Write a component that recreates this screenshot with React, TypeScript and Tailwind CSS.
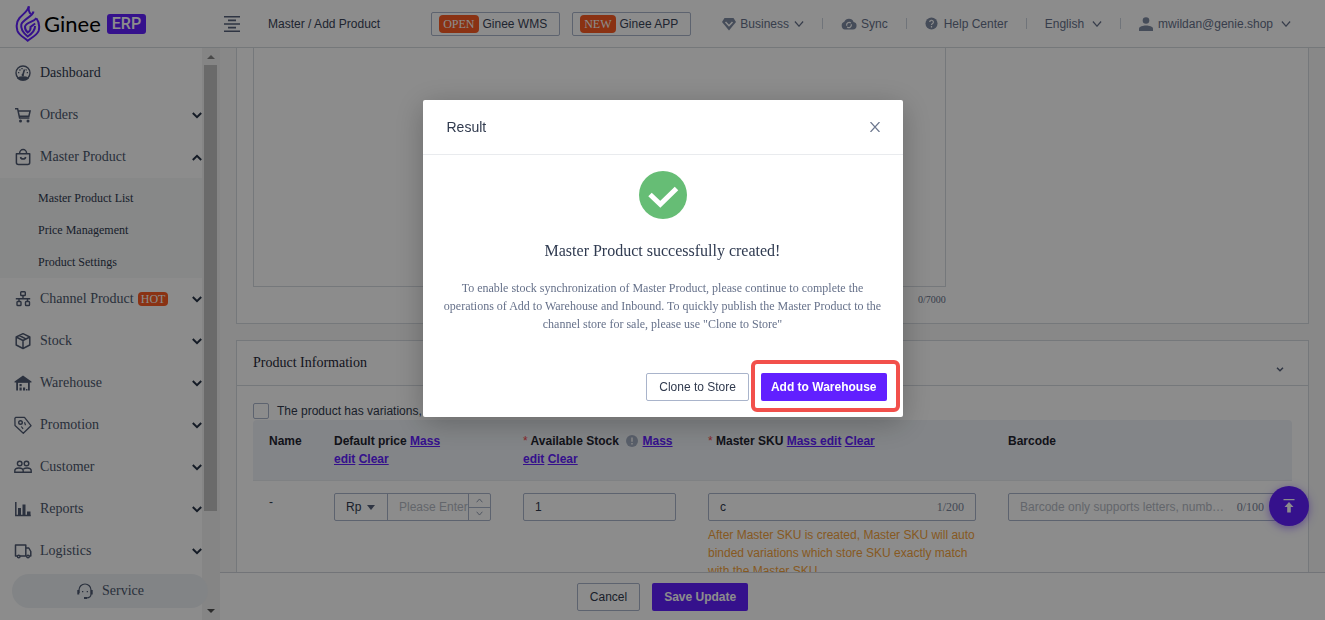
import { useState } from 'react'
import type { ReactNode } from 'react'

const serif = "font-['Liberation_Serif',serif]"

type IconProps = { children: ReactNode; className?: string }

function Icon({ children, className = '' }: IconProps) {
  return (
    <svg viewBox="0 0 18 18" fill="none" stroke="currentColor" strokeWidth="1.4" aria-hidden="true"
      className={`size-[18px] shrink-0 ${className}`}>
      {children}
    </svg>
  )
}

function Chevron({ className = 'h-[6px] w-[10px]' }: { className?: string }) {
  return (
    <svg viewBox="0 0 10 6" fill="none" stroke="currentColor" strokeWidth="1.2" aria-hidden="true"
      className={`shrink-0 ${className}`}>
      <path d="M.9 .5 5 5.2 9.1 .5" />
    </svg>
  )
}

const icons = {
  dashboard: (
    <Icon>
      <circle cx="9" cy="9" r="7" />
      <path d="M4 14.2c2-1.7 8-1.7 10 0-2 2.4-8 2.4-10 0z" fill="currentColor" />
      <path d="M9 10.5 10.5 5.5" strokeWidth="1.6" />
      <circle cx="8.8" cy="11" r="1.2" fill="currentColor" stroke="none" />
      <path d="M4 8.6h1.3M12.7 8.6h1.3M5.5 5.5l.9.9M8 4v1.2M12.5 5.5l-.7.7" />
    </Icon>
  ),
  orders: (
    <Icon>
      <path d="M1 2.700h2.600l2 9.300h9.800M4.200 5h11.900l-1.200 5.200H5.400" strokeWidth="1.5" />
      <circle cx="6.5" cy="15" r="1.5" fill="currentColor" stroke="none" />
      <circle cx="14" cy="15" r="1.5" fill="currentColor" stroke="none" />
    </Icon>
  ),
  bag: (
    <Icon>
      <path d="M2.400 5.700h13.300v8.800a2 2 0 0 1-2 2H4.400a2 2 0 0 1-2-2z" strokeWidth="1.5" strokeLinejoin="round" />
      <path d="M5.600 5.500a3.500 4 0 0 1 7 0M6.500 9c.5 2.700 4.700 2.700 5.200 0" strokeWidth="1.5" />
    </Icon>
  ),
  channel: (
    <Icon>
      <rect x="6.7" y="1.700" width="4.6" height="3.8" rx=".8" />
      <rect x="3" y="11.5" width="4" height="4" rx=".8" />
      <rect x="11.5" y="11.5" width="4" height="4" rx=".8" />
      <path d="M9 5.500v3.200M1.800 8.700h14.400M5 8.700v2.800M13.500 8.700v2.800" />
    </Icon>
  ),
  stock: (
    <Icon>
      <path d="M9 1.700 15.800 5v8L9 16.500 2.200 13V5zM2.200 5 9 8.500 15.800 5M9 8.500v8M5.300 3.500l7 3.600" strokeLinejoin="round" strokeWidth="1.5" />
    </Icon>
  ),
  warehouse: (
    <Icon>
      <path d="M.5 7.500 9 1.500l8.500 6V8.500h-1.700V16.500h-1.800V8.500H4V16.500H2.200V8.500H.5z" fill="currentColor" stroke="none" />
      <path d="M3 7h12v1.700H3z" fill="currentColor" stroke="none" />
      <path d="M5.500 10h2.200v2.200H5.500zM5.500 13.500h2.200v3H5.500zM9 13.500h2.200v3H9zM12 15h1.500v1.500H12z" fill="currentColor" stroke="none" />
    </Icon>
  ),
  promotion: (
    <Icon>
      <path d="M.9 2.300 1 9.500 9.300 17.200 17 9.700 10.500 1.300H2z" strokeWidth="1.3" strokeLinejoin="round" />
      <circle cx="6.5" cy="6.5" r="1.8" />
      <path d="M10.500 6.200l1 3M7.300 10.500l1.800 2.300" strokeWidth="1.2" />
    </Icon>
  ),
  customer: (
    <Icon>
      <circle cx="5.7" cy="5.5" r="2.3" />
      <circle cx="12.5" cy="5.5" r="2.3" />
      <path d="M.8 14.300v-1.500c0-2 1.600-2.800 4-2.800s4.400.8 4.400 2.800v1.500zM9.200 14.300h8v-1.500c0-2-1.600-2.800-4-2.800-2 0-2.800.3-3.800 1" />
    </Icon>
  ),
  reports: (
    <Icon>
      <path d="M1.800 2v13.500h15" strokeWidth="1.5" />
      <path d="M4 8h3v7H4zM8.500 4.500h3v10.500h-3zM13 11.500h3.500v3.500H13z" fill="currentColor" stroke="none" />
    </Icon>
  ),
  logistics: (
    <Icon>
      <path d="M3.500 14H1.500V3h10.300v11H6M11.800 6h3l2 3.500V14h-1.500M11.800 14h.8" strokeLinejoin="round" strokeWidth="1.5" />
      <circle cx="4.7" cy="14.5" r="1.3" />
      <circle cx="14" cy="14.5" r="1.3" />
    </Icon>
  ),
}

type MenuEntry = { label: string; icon: ReactNode; children?: string[]; hot?: boolean; leaf?: boolean }

const menu: MenuEntry[] = [
  { label: 'Dashboard', icon: icons.dashboard, leaf: true },
  { label: 'Orders', icon: icons.orders },
  { label: 'Master Product', icon: icons.bag, children: ['Master Product List', 'Price Management', 'Product Settings'] },
  { label: 'Channel Product', icon: icons.channel, hot: true },
  { label: 'Stock', icon: icons.stock },
  { label: 'Warehouse', icon: icons.warehouse },
  { label: 'Promotion', icon: icons.promotion },
  { label: 'Customer', icon: icons.customer },
  { label: 'Reports', icon: icons.reports },
  { label: 'Logistics', icon: icons.logistics },
]

function Logo() {
  return (
    <a href="#" className="flex items-center gap-[3px]">
      <svg viewBox="0 0 26 38" fill="none" stroke="#6120ff" strokeWidth="2" aria-hidden="true" className="h-[38px] w-[26px]">
        <path d="M13.800 1.300C13 6 8 9 4.500 13 1.500 16.500 1.300 22 2.500 26 4 30 9 32.500 12.700 35.700 17 32.500 22 30 23.600 26 24.600 22 24.200 17 21.500 13.500" />
        <path d="M13.800 1.300C13.300 5.500 14 7.500 16 9" />
        <path d="M18.500 6.500C17.500 12 8 14 6.300 19.500 5.200 25 9 28.500 12.700 31.500 17 28.500 20.300 25.500 20 21" />
        <path d="M21.500 13C19 17 11 17 10 21.500 9.800 24.500 11 26 12.700 27.500 15 26 16 24.500 15.500 22L20.200 18.500" />
      </svg>
      <span className="font-['Lato',sans-serif] text-[22px] leading-6 text-black">Ginee</span>
      <span className="ml-[3px] rounded-[3px] bg-[#6120ff] px-[5px] font-['Roboto',sans-serif] text-base leading-5 font-medium text-white">ERP</span>
    </a>
  )
}

function PromoButton({ tag, label }: { tag: string; label: string }) {
  return (
    <button type="button" className="flex h-6 items-center gap-1 rounded-[2px] border border-[#a9b4cb] pr-3 pl-[7px] text-[#3a4458]">
      <span className={`${serif} rounded bg-[#fc5b23] px-1 leading-[18px] text-white`}>{tag}</span>
      {label}
    </button>
  )
}

function Header() {
  return (
    <header className="flex h-12 shrink-0 items-center border-b border-[#d6dade] bg-white pr-[34px] pl-[15px] text-[#66718a]">
      <Logo />
      <button type="button" aria-label="Collapse menu" className="ml-[78px] text-[#56627a]">
        <svg viewBox="0 0 16 16" stroke="currentColor" strokeWidth="1.6" className="size-4" aria-hidden="true">
          <path d="M0 .8h16M4 4.400h8M0 8h16M4 11.600h8M0 15.200h16" />
        </svg>
      </button>
      <div className="ml-7 text-[#3a4458]">Master / Add Product</div>
      <div className="ml-[51px] flex gap-3">
        <PromoButton tag="OPEN" label="Ginee WMS" />
        <PromoButton tag="NEW" label="Ginee APP" />
      </div>
      <nav className="ml-auto flex items-center gap-[18px]">
        <button type="button" className="flex items-center gap-1">
          <svg viewBox="0 0 14 14" className="size-[14px]" aria-hidden="true">
            <path d="M2.500 1h9L14 5 7 13.500 0 5z" fill="#7f8ba3" />
            <path d="M3.500 5 7 8.700 10.500 5" fill="none" stroke="#fff" strokeWidth="1.5" />
          </svg>
          Business
          <Chevron className="ml-px h-[6px] w-[10px]" />
        </button>
        <span className="h-[11px] w-px bg-[#cdd3de]" />
        <a href="#" className="flex items-center gap-1">
          <svg viewBox="0 0 16 12" className="h-3 w-4" aria-hidden="true">
            <path d="M4 11.500a4 4 0 0 1-.7-7.700A5 5 0 0 1 12.600 4 3.800 3.800 0 0 1 12 11.500z" fill="#7f8ba3" />
            <path d="M9.800 5a2.500 2.500 0 0 0-4 2.700M6.200 9a2.500 2.500 0 0 0 4-2.700" fill="none" stroke="#fff" strokeWidth="1.2" />
          </svg>
          Sync
        </a>
        <span className="h-[11px] w-px bg-[#cdd3de]" />
        <a href="#" className="flex items-center gap-[6px]">
          <svg viewBox="0 0 14 14" className="size-[13px]" aria-hidden="true">
            <circle cx="7" cy="7" r="6.5" fill="#7f8ba3" />
            <path d="M5 5.500a2 2 0 1 1 2.900 1.800c-.7.400-.9.700-.9 1.400M7 9.800v1.400" fill="none" stroke="#fff" strokeWidth="1.3" />
          </svg>
          Help Center
        </a>
        <span className="h-[11px] w-px bg-[#cdd3de]" />
        <button type="button" className="flex items-center gap-2">
          English
          <Chevron />
        </button>
        <span className="h-[11px] w-px bg-[#cdd3de]" />
        <button type="button" className="flex items-center gap-[5px]">
          <svg viewBox="0 0 14 14" fill="#7f8ba3" className="size-[14px]" aria-hidden="true">
            <circle cx="7" cy="3.5" r="3.3" />
            <path d="M0 14v-2.500C0 9.500 4 8.500 7 8.500s7 1 7 3V14z" />
          </svg>
          mwildan@genie.shop
          <Chevron className="ml-[3px] h-[6px] w-[10px]" />
        </button>
      </nav>
    </header>
  )
}

function MenuChevron({ open }: { open?: boolean }) {
  return (
    <svg viewBox="0 0 10 7" fill="none" stroke="#263246" strokeWidth="2" aria-hidden="true"
      className={`ml-auto h-[7px] w-[10px] ${open ? 'rotate-180' : ''}`}>
      <path d="M.8 1 5 5.200 9.200 1" />
    </svg>
  )
}

function Sidebar() {
  return (
    <aside className={`${serif} flex w-[220px] shrink-0 bg-[#f2f2f2]`}>
      <div className="flex min-w-0 flex-1 flex-col bg-white pt-1">
        <ul>
          {menu.map(item => (
            <li key={item.label}>
              <button type="button"
                className={`flex h-[42px] w-full items-center pl-[14px] text-sm ${item.leaf ? 'text-[#2f3a50]' : 'text-[#4c576d]'}`}>
                <span className="text-[#4f5a72]">{item.icon}</span>
                <span className="ml-2">{item.label}</span>
                {item.hot && (
                  <span className="ml-1 rounded bg-[#fc5b23] px-[3px] text-xs leading-[14px] text-white">HOT</span>
                )}
                {!item.leaf && <MenuChevron open={!!item.children} />}
              </button>
              {item.children && (
                <ul className="bg-[#f6f7f7] pt-1 text-xs text-[#2f3a50]">
                  {item.children.map(child => (
                    <li key={child}>
                      <a href="#" className="flex h-8 items-center pl-[38px]">{child}</a>
                    </li>
                  ))}
                </ul>
              )}
            </li>
          ))}
        </ul>
        <button type="button"
          className="relative z-10 mt-[2px] -mr-[6px] ml-3 flex h-[34px] shrink-0 items-center justify-center gap-2 rounded-full bg-[#edf1f4] text-sm text-[#4c576d]">
          <Icon className="text-[#4f5a72]">
            <path d="M3 11V8a6 6 0 0 1 12 0v4c0 2-1.500 3.800-4.500 4" strokeWidth="1.2" />
            <path d="M1.300 8h2v4.500h-2zM14.700 8h2v4.500h-2zM8 15h3v2H8zM6 9h1.300v1.300H6zM10.700 9h1.300v1.300h-1.300z" fill="currentColor" stroke="none" />
          </Icon>
          Service
        </button>
      </div>
      <div className="flex w-[18px] flex-col items-center" aria-hidden="true">
        <span className="mt-[7px] border-x-4 border-b-4 border-x-transparent border-b-[#858585]" />
        <span className="mt-[6px] mr-[3px] h-[446px] w-[13px] self-end bg-[#c1c1c1]" />
        <span className="mt-auto mb-[7px] border-x-4 border-t-4 border-x-transparent border-t-[#505050]" />
      </div>
    </aside>
  )
}

const field = 'h-7 w-full rounded-[2px] border border-[#a9b4cb] bg-white pl-[11px] text-xs text-[#303a4e] outline-none placeholder:text-[#b5bac4]'

function MassLinks() {
  return (
    <>
      <a href="#" className="text-[#6120ff] underline">Mass edit</a>{' '}
      <a href="#" className="text-[#6120ff] underline">Clear</a>
    </>
  )
}

function ProductTable() {
  const [price, setPrice] = useState('')
  const [stock, setStock] = useState('1')
  const [sku, setSku] = useState('c')
  const [barcode, setBarcode] = useState('')

  return (
    <table className="w-full table-fixed border-separate border-spacing-0 text-left text-xs leading-[18px]">
      <colgroup>
        <col className="w-[65px]" />
        <col className="w-[189px]" />
        <col className="w-[185px]" />
        <col />
        <col />
      </colgroup>
      <thead>
        <tr className="align-top text-[#1f2430] [&>th]:border-b [&>th]:border-[#e8ebef] [&>th]:bg-[#eff3f7] [&>th]:px-4 [&>th]:py-3">
          <th scope="col" className="rounded-tl">Name</th>
          <th scope="col">
            <div className="max-w-[120px]">Default price <MassLinks /></div>
          </th>
          <th scope="col">
            <span className="font-normal text-[#f5484d]">*</span> Available Stock{' '}
            <svg viewBox="0 0 12 12" className="mr-px ml-1 inline size-3 align-[-2px]" aria-hidden="true">
              <circle cx="6" cy="6" r="6" fill="#a3aec2" />
              <path d="M6 2.500v4.300M6 8v1.500" stroke="#fff" strokeWidth="1.4" />
            </svg>{' '}
            <MassLinks />
          </th>
          <th scope="col">
            <span className="font-normal text-[#f5484d]">*</span> Master SKU <MassLinks />
          </th>
          <th scope="col" className="rounded-tr">Barcode</th>
        </tr>
      </thead>
      <tbody>
        <tr className="align-top [&>td]:px-4 [&>td]:py-3">
          <td>-</td>
          <td>
            <div className="flex h-7 rounded-[2px] border border-[#a9b4cb]">
              <div className="relative w-[53px] shrink-0 border-r border-[#a9b4cb]">
                <select aria-label="Currency" className="size-full appearance-none pl-[11px] text-[#303a4e] outline-none">
                  <option>Rp</option>
                </select>
                <span className="pointer-events-none absolute top-[11px] right-3 border-x-4 border-t-5 border-x-transparent border-t-[#56617a]" />
              </div>
              <input aria-label="Default price" placeholder="Please Enter" value={price} onChange={e => setPrice(e.target.value)}
                className="min-w-0 flex-1 pl-[11px] text-[#303a4e] outline-none placeholder:text-[#b5bac4]" />
              <div className="flex w-[22px] shrink-0 flex-col border-l border-[#a9b4cb] text-[#7f8ba3]">
                <button type="button" aria-label="Increase" className="flex flex-1 items-center justify-center border-b border-[#a9b4cb]">
                  <Chevron className="h-[5px] w-[7px] rotate-180" />
                </button>
                <button type="button" aria-label="Decrease" className="flex flex-1 items-center justify-center">
                  <Chevron className="h-[5px] w-[7px]" />
                </button>
              </div>
            </div>
          </td>
          <td>
            <input aria-label="Available stock" value={stock} onChange={e => setStock(e.target.value)} className={field} />
          </td>
          <td>
            <div className="relative">
              <input aria-label="Master SKU" maxLength={200} value={sku} onChange={e => setSku(e.target.value)}
                className={`${field} pr-12`} />
              <span className={`${serif} absolute top-[5px] right-3 text-[#7b869c]`}>{sku.length}/200</span>
            </div>
            <p className="mt-[5px] text-[#f5a33c]">
              After Master SKU is created, Master SKU will auto binded variations which store SKU exactly match with the Master SKU
            </p>
          </td>
          <td>
            <div className="relative">
              <input aria-label="Barcode" maxLength={100} placeholder="Barcode only supports letters, numbers and hyphens"
                value={barcode} onChange={e => setBarcode(e.target.value)}
                className={`${field} pr-12 text-ellipsis`} />
              <span className={`${serif} absolute top-[5px] right-3 text-[#7b869c]`}>{barcode.length}/100</span>
            </div>
          </td>
        </tr>
      </tbody>
    </table>
  )
}

function ResultDialog() {
  return (
    <div className="fixed inset-0 z-20 bg-black/45 pt-[100px]">
      <div role="dialog" aria-modal="true" aria-labelledby="result-title"
        className="mx-auto w-[480px] rounded-[2px] bg-white shadow-[0_6px_30px_rgba(0,0,0,0.25)]">
        <div className="flex h-[55px] items-center justify-between border-b border-[#e9ebee] pr-[23px] pl-6">
          <h2 id="result-title" className="text-sm text-[#303a4e]">Result</h2>
          <button type="button" aria-label="Close" className="text-[#6c778e]">
            <svg viewBox="0 0 10 10" stroke="currentColor" strokeWidth="1.2" className="size-[10px]" aria-hidden="true">
              <path d="M.5 0 9.500 10M9.500 0 .5 10" />
            </svg>
          </button>
        </div>
        <div className={`${serif} px-4 pt-4 text-center`}>
          <svg viewBox="0 0 48 48" className="mx-auto size-12" aria-hidden="true">
            <circle cx="24" cy="24" r="24" fill="#66bd75" />
            <path d="M11 23.500 21.300 33.300 37.500 17.500" fill="none" stroke="#fff" strokeWidth="5" />
          </svg>
          <p className="mt-5 text-base leading-6 text-[#2f3a50]">Master Product successfully created!</p>
          <p className="mt-4 text-xs leading-[18px] text-[#66718a]">
            To enable stock synchronization of Master Product, please continue to complete the operations of Add to
            Warehouse and Inbound. To quickly publish the Master Product to the channel store for sale, please use
            "Clone to Store"
          </p>
        </div>
        <div className="mt-10 flex justify-end gap-3 px-4 pb-4">
          <button type="button" className="h-7 rounded-[2px] border border-[#a9b4cb] px-3 text-[#303a4e]">Clone to Store</button>
          <div className="relative">
            <button type="button" className="h-7 rounded-[2px] bg-[#6120ff] px-[10px] font-bold text-white">Add to Warehouse</button>
            <span className="pointer-events-none absolute -top-[13px] -right-[13px] -bottom-[11px] -left-[10px] rounded-md border-4 border-[#f2504b]" />
          </div>
        </div>
      </div>
    </div>
  )
}

export default function App() {
  const [hasVariations, setHasVariations] = useState(false)

  return (
    <div className="flex h-screen flex-col overflow-hidden bg-white font-['Liberation_Sans',sans-serif] text-xs leading-[18px] text-[#303a4e]">
      <Header />
      <div className="flex min-h-0 flex-1">
        <Sidebar />
        <div className="flex min-w-0 flex-1 flex-col">
          <main className="min-h-0 flex-1 overflow-hidden bg-[#f7f7f7] px-4">

            {/* Description */}
            <section className="border border-t-0 border-[#d6dbe1] bg-white px-4 pb-[14px]">
              <div className="w-2/3">
                <textarea aria-label="Description" maxLength={7000}
                  className="block h-[239px] w-full resize-none border border-t-0 border-[#d6dbe1] outline-none" />
                <p className={`${serif} mt-1 text-right text-[10px] leading-[18px] text-[#66718a]`}>0/7000</p>
              </div>
            </section>

            {/* Product information */}
            <section className="mt-4 border border-[#d6dbe1] bg-white">
              <div className="flex h-[45px] items-center justify-between border-b border-[#d6dbe1] px-4">
                <h2 className={`${serif} text-sm text-[#1f2738]`}>Product Information</h2>
                <button type="button" aria-label="Collapse section" className="mt-3 mr-2 text-[#56617a]">
                  <svg viewBox="0 0 8 5" fill="none" stroke="currentColor" strokeWidth="1.5" className="h-[5px] w-2" aria-hidden="true">
                    <path d="M1 .8 4 3.800 7 .8" />
                  </svg>
                </button>
              </div>
              <div className="px-4 pt-4">
                <label className="flex items-center gap-2">
                  <input type="checkbox" checked={hasVariations} onChange={e => setHasVariations(e.target.checked)}
                    className="size-4 appearance-none rounded-[2px] border border-[#a9b4cb] bg-white checked:bg-[#6120ff]" />
                  The product has variations, such as color, size, etc.
                </label>
                <ProductTable />
              </div>
            </section>
          </main>

          <footer className="flex h-12 shrink-0 items-center justify-center gap-3 border-t border-[#d0d4da] bg-white pr-[220px]">
            <button type="button" className="h-7 rounded-[2px] border border-[#a9b4cb] px-3">Cancel</button>
            <button type="button" className="h-7 rounded-[2px] bg-[#6120ff] px-3 font-bold text-white">Save Update</button>
          </footer>
        </div>
      </div>

      <button type="button" aria-label="Back to top"
        className="fixed right-4 bottom-[94px] z-10 flex size-10 items-center justify-center rounded-full bg-[#6120ff] text-white shadow-[0_2px_8px_rgba(97,32,255,0.5)]">
        <svg viewBox="0 0 14 14" fill="currentColor" className="size-[14px]" aria-hidden="true">
          <path d="M1.500 0h11v1.300h-11zM7 3l4.500 5H8.800v5.500H5.200V8H2.500z" />
        </svg>
      </button>

      <ResultDialog />
    </div>
  )
}
